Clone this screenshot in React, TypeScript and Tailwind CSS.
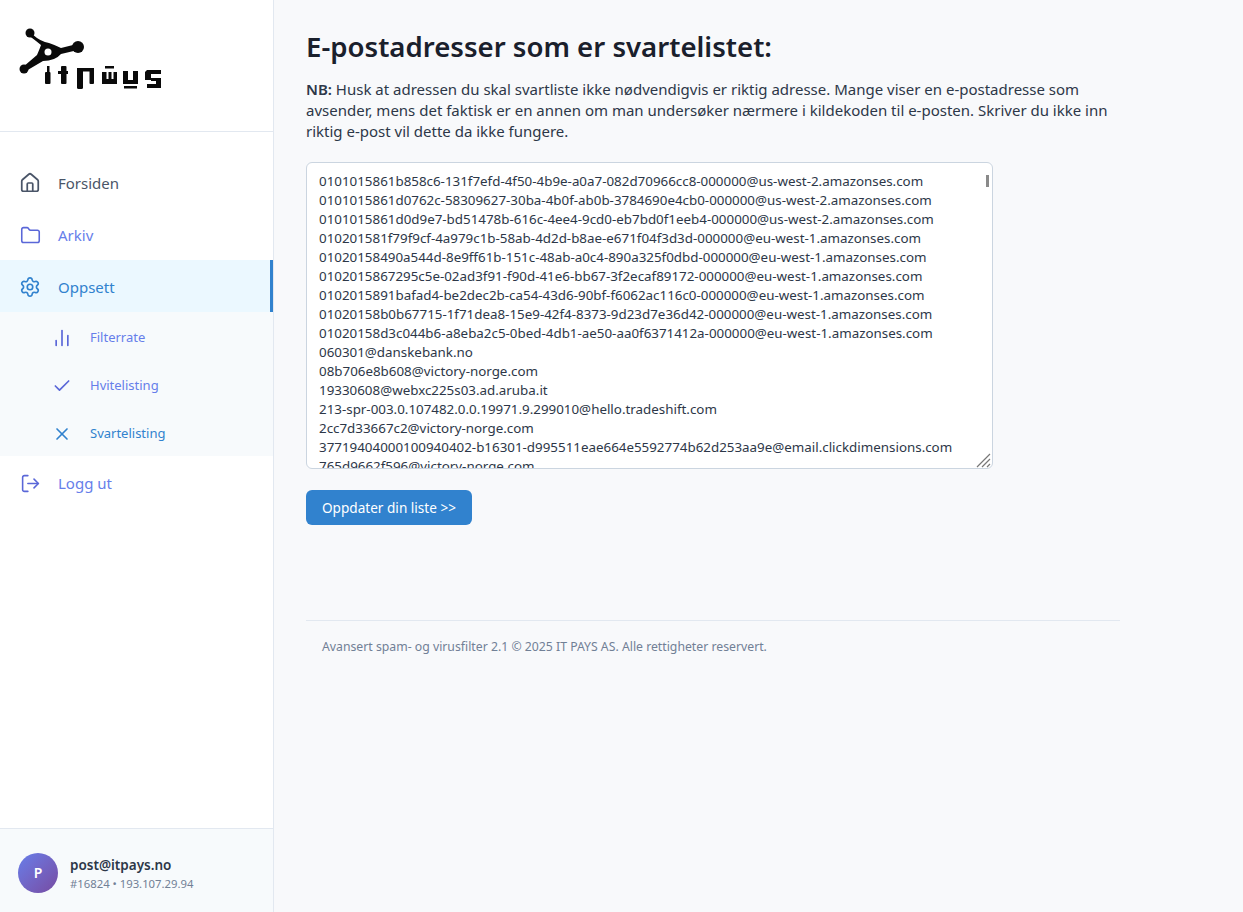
import { ChartNoAxesColumn, Check, Folder, House, LogOut, Settings, X } from "lucide-react";

const emails = [
  "0101015861b858c6-131f7efd-4f50-4b9e-a0a7-082d70966cc8-000000@us-west-2.amazonses.com",
  "0101015861d0762c-58309627-30ba-4b0f-ab0b-3784690e4cb0-000000@us-west-2.amazonses.com",
  "0101015861d0d9e7-bd51478b-616c-4ee4-9cd0-eb7bd0f1eeb4-000000@us-west-2.amazonses.com",
  "010201581f79f9cf-4a979c1b-58ab-4d2d-b8ae-e671f04f3d3d-000000@eu-west-1.amazonses.com",
  "01020158490a544d-8e9ff61b-151c-48ab-a0c4-890a325f0dbd-000000@eu-west-1.amazonses.com",
  "0102015867295c5e-02ad3f91-f90d-41e6-bb67-3f2ecaf89172-000000@eu-west-1.amazonses.com",
  "0102015891bafad4-be2dec2b-ca54-43d6-90bf-f6062ac116c0-000000@eu-west-1.amazonses.com",
  "01020158b0b67715-1f71dea8-15e9-42f4-8373-9d23d7e36d42-000000@eu-west-1.amazonses.com",
  "01020158d3c044b6-a8eba2c5-0bed-4db1-ae50-aa0f6371412a-000000@eu-west-1.amazonses.com",
  "060301@danskebank.no",
  "08b706e8b608@victory-norge.com",
  "19330608@webxc225s03.ad.aruba.it",
  "213-spr-003.0.107482.0.0.19971.9.299010@hello.tradeshift.com",
  "2cc7d33667c2@victory-norge.com",
  "37719404000100940402-b16301-d995511eae664e5592774b62d253aa9e@email.clickdimensions.com",
  "765d9662f596@victory-norge.com",
];

function Logo() {
  return (
    <svg width="150" height="70" viewBox="0 0 150 70" className="ml-[17px] mt-[28px]" fill="#0a0a0a">
      {/* network mark */}
      <path d="M12 4 L15 6 Q24 14 32 15 Q38 17 44 20 L60 16 L61 22 L44 26 Q38 33 26 33 L9 43 L6 39 L20 27 Q23 20 24 17 Q18 12 11 7 Z" />
      <circle cx="13" cy="5" r="4.5" />
      <circle cx="61" cy="19" r="6" />
      <circle cx="7" cy="41" r="4.5" />
      <circle cx="31" cy="24" r="3.5" fill="#fff" />
      {/* wordmark */}
      <rect x="30" y="38" width="2.5" height="7" />
      <rect x="28" y="44" width="5.5" height="12" rx="1" />
      <rect x="44" y="38" width="5.5" height="18" rx="1" />
      <rect x="41" y="43" width="10" height="3" />
      <rect x="60" y="40" width="6" height="21" rx="1.5" />
      <rect x="60" y="40" width="17" height="3.5" />
      <rect x="72.5" y="40" width="4.5" height="16" rx="1" />
      <rect x="88" y="38" width="9" height="2.5" />
      <path d="M85 44h4.5v7h2v-7h3v7h2v-7h3.5v12H85z" />
      <path d="M106 43h5v9h5v-9h5v13h-15z" />
      <rect x="107" y="58" width="13" height="2.5" />
      <path d="M130 42h14v4h-10v6h-6v-8z" />
      <path d="M134 50h10v10h-14v-4h9v-3h-5z" />
    </svg>
  );
}

function IconBox({ children }: { children: React.ReactNode }) {
  return <span className="flex w-6 justify-center">{children}</span>;
}

export default function App() {
  return (
    <div className="flex min-h-[912px] bg-[#f8f9fb] font-['Noto_Sans',sans-serif] text-[#1a202c]">
      <aside className="flex w-[274px] shrink-0 flex-col border-r border-[#e2e8f0] bg-white">
        <div className="h-[132px] border-b border-[#e2e8f0]">
          <Logo />
        </div>
        <nav className="flex flex-1 flex-col pt-6 text-[15px]">
          <a className="flex h-[52px] items-center gap-4 pt-0.5 pl-[18px] text-[#4a5568]">
            <IconBox>
              <House size={22} strokeWidth={1.9} />
            </IconBox>
            Forsiden
          </a>
          <a className="flex h-[52px] items-center gap-4 pt-0.5 pl-[18px] text-[#667eea]">
            <IconBox>
              <Folder size={21} strokeWidth={1.8} color="#5a67d8" />
            </IconBox>
            Arkiv
          </a>
          <a className="flex h-[52px] items-center gap-4 border-r-[3px] border-[#3182ce] bg-[#ebf8ff] pt-0.5 pl-[18px] text-[#3182ce]">
            <IconBox>
              <Settings size={22} strokeWidth={1.8} />
            </IconBox>
            Oppsett
          </a>
          <div className="h-36 bg-[#f7fafc] text-[13px]">
            <a className="flex h-12 items-center gap-4 pt-1 pl-[50px] text-[#667eea]">
              <IconBox>
                <ChartNoAxesColumn size={20} strokeWidth={2} color="#5a67d8" />
              </IconBox>
              Filterrate
            </a>
            <a className="flex h-12 items-center gap-4 pt-1 pl-[50px] text-[#667eea]">
              <IconBox>
                <Check size={20} strokeWidth={2} color="#5a67d8" />
              </IconBox>
              Hvitelisting
            </a>
            <a className="flex h-12 items-center gap-4 pt-1 pl-[50px] text-[#3182ce]">
              <IconBox>
                <X size={20} strokeWidth={2} />
              </IconBox>
              Svartelisting
            </a>
          </div>
          <a className="mt-px flex h-[52px] items-center gap-4 pl-[18px] text-[#667eea]">
            <IconBox>
              <LogOut size={21} strokeWidth={1.8} color="#5a67d8" />
            </IconBox>
            Logg ut
          </a>
        </nav>
        <div className="flex h-[84px] items-center gap-3 border-t border-[#e2e8f0] bg-[#f7fafc] pt-1 pl-[18px]">
          <div className="flex h-10 w-10 items-center justify-center rounded-full bg-gradient-to-br from-[#667eea] to-[#764ba2] text-sm font-semibold text-white">
            P
          </div>
          <div className="pt-[3px]">
            <div className="text-[13.5px] leading-[19px] font-semibold text-[#2d3748]">post@itpays.no</div>
            <div className="text-[11.3px] leading-[17px] text-[#718096]">#16824 • 193.107.29.94</div>
          </div>
        </div>
      </aside>
      <main className="w-[846px] pl-8">
        <h1 className="pt-[25px] text-[27.6px] leading-[42px] font-semibold text-[#1a202c]">E-postadresser som er svartelistet:</h1>
        <p className="mt-3 text-[15px] leading-[21px] text-[#2d3748]">
          <strong className="font-semibold">NB:</strong> Husk at adressen du skal svartliste ikke nødvendigvis er riktig adresse. Mange viser en e-postadresse som avsender, mens det faktisk er en annen om man undersøker nærmere i kildekoden til e-posten. Skriver du ikke inn riktig e-post vil dette da ikke fungere.
        </p>
        <div className="relative mt-5 w-[687px]">
          <textarea
            readOnly
            value={emails.join("\n")}
            className="block h-[307px] w-full resize-none overflow-hidden rounded-md border border-[#cbd5e0] bg-white px-3 pt-[9px] text-[13.36px] leading-[19px] text-[#2d3748] outline-none"
          />
          {/* scrollbar thumb and resize grip */}
          <div className="absolute top-[13px] right-[4px] h-3 w-[3px] bg-[#8a8a8a]" />
          <svg width="16" height="15" viewBox="0 0 16 15" className="absolute right-px bottom-px" stroke="#777" strokeWidth="1.2">
            <path d="M1 14 14 1M6 14 14 6M11 14 14 11" />
          </svg>
        </div>
        <button className="mt-[21px] block h-[35px] w-[166px] rounded-md bg-[#3182ce] pt-px text-[13.6px] text-white">
          Oppdater din liste &gt;&gt;
        </button>
        <footer className="mt-[95px] border-t border-[#e2e8f0] px-4 pt-[18px] text-[12.25px] leading-[16px] text-[#718096]">
          Avansert spam- og virusfilter 2.1 © 2025 IT PAYS AS. Alle rettigheter reservert.
        </footer>
      </main>
    </div>
  );
}
